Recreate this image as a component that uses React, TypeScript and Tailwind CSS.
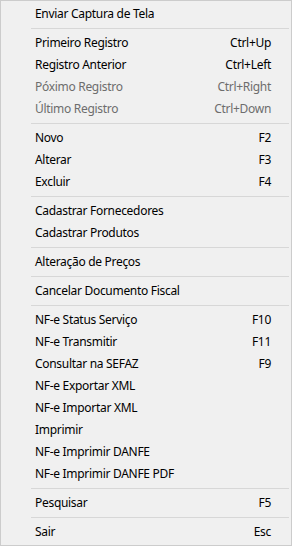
type Item = { label: string; shortcut?: string; disabled?: boolean } | "sep";

const items: Item[] = [
  { label: "Enviar Captura de Tela" },
  "sep",
  { label: "Primeiro Registro", shortcut: "Ctrl+Up" },
  { label: "Registro Anterior", shortcut: "Ctrl+Left" },
  { label: "Póximo Registro", shortcut: "Ctrl+Right", disabled: true },
  { label: "Último Registro", shortcut: "Ctrl+Down", disabled: true },
  "sep",
  { label: "Novo", shortcut: "F2" },
  { label: "Alterar", shortcut: "F3" },
  { label: "Excluir", shortcut: "F4" },
  "sep",
  { label: "Cadastrar Fornecedores" },
  { label: "Cadastrar Produtos" },
  "sep",
  { label: "Alteração de Preços" },
  "sep",
  { label: "Cancelar Documento Fiscal" },
  "sep",
  { label: "NF-e Status Serviço", shortcut: "F10" },
  { label: "NF-e Transmitir", shortcut: "F11" },
  { label: "Consultar na SEFAZ", shortcut: "F9" },
  { label: "NF-e Exportar XML" },
  { label: "NF-e Importar XML" },
  { label: "Imprimir" },
  { label: "NF-e Imprimir DANFE" },
  { label: "NF-e Imprimir DANFE PDF" },
  "sep",
  { label: "Pesquisar", shortcut: "F5" },
  "sep",
  { label: "Sair", shortcut: "Esc" },
];

export default function App() {
  return (
    <div
      className="w-[292px] h-[546px] border border-[#cccccc] bg-[#f0f0f0] p-[2px] text-[12px] tracking-[-0.3px]"
      style={{ fontFamily: '"Noto Sans", "Open Sans", sans-serif' }}
    >
      {items.map((it, i) =>
        it === "sep" ? (
          <div key={i} className="h-[7px] pt-[3px] pl-[28px]">
            <div className="h-px bg-[#d7d7d7]" />
          </div>
        ) : (
          <div
            key={i}
            className={
              "flex h-[22px] items-center justify-between pl-[32px] pr-[18px] " +
              (it.disabled ? "text-[#6d6d6d]" : "text-black")
            }
          >
            <span>{it.label}</span>
            {it.shortcut && <span>{it.shortcut}</span>}
          </div>
        )
      )}
    </div>
  );
}
